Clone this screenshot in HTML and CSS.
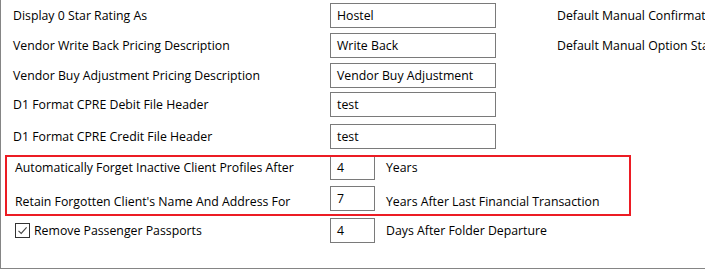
FILE: index.html
```html
<!DOCTYPE html>
<html>
<head>
<meta charset="utf-8">
<link rel="stylesheet" href="styles.css">
</head>
<body>
<div class="group">
  <div class="rows">
    <div class="row r1">
      <span class="label">Display 0 Star Rating As</span>
      <span class="field"><span class="box wide">Hostel</span></span>
      <span class="side">Default Manual Confirmation Status</span>
    </div>
    <div class="row r2">
      <span class="label">Vendor Write Back Pricing Description</span>
      <span class="field"><span class="box wide">Write Back</span></span>
      <span class="side">Default Manual Option Status</span>
    </div>
    <div class="row r3">
      <span class="label">Vendor Buy Adjustment Pricing Description</span>
      <span class="field"><span class="box wide">Vendor Buy Adjustment</span></span>
    </div>
    <div class="row r4">
      <span class="label">D1 Format CPRE Debit File Header</span>
      <span class="field"><span class="box wide">test</span></span>
    </div>
    <div class="row r5">
      <span class="label">D1 Format CPRE Credit File Header</span>
      <span class="field"><span class="box wide">test</span></span>
    </div>
    <div class="highlight">
      <div class="row r6">
        <span class="label inset">Automatically Forget Inactive Client Profiles After</span>
        <span class="field"><span class="box small">4</span><span class="suffix">Years</span></span>
      </div>
      <div class="row r7 low">
        <span class="label inset">Retain Forgotten Client's Name And Address For</span>
        <span class="field"><span class="box small">7</span><span class="suffix">Years After Last Financial Transaction</span></span>
      </div>
    </div>
    <div class="row r8">
      <span class="label check-label"><span class="check"><svg width="13" height="13" viewBox="0 0 13 13"><path d="M2.5 6.8 L5.2 9.4 L10.6 3.4" fill="none" stroke="#444" stroke-width="1.1"/></svg></span>Remove Passenger Passports</span>
      <span class="field"><span class="box small">4</span><span class="suffix">Days After Folder Departure</span></span>
    </div>
  </div>
</div>
</body>
</html>
```
FILE: styles.css
```css
html, body {
  margin: 0;
  padding: 0;
  background: #ffffff;
  overflow: hidden;
}
body {
  font-family: "Open Sans", "Noto Sans", sans-serif;
  font-size: 12.3px;
  color: #000000;
  width: 705px;
  height: 277px;
}
.group {
  width: 760px;
  height: 269px;
  border-left: 1px solid #858585;
  border-bottom: 1px solid #858585;
  box-sizing: border-box;
}
.rows {
  display: flex;
  flex-direction: column;
  padding-top: 3px;
}
.row {
  display: flex;
  align-items: center;
  height: 25px;
  white-space: nowrap;
}
.r2, .r3 { margin-top: 5px; }
.r4 { margin-top: 4px; }
.r5 { margin-top: 7px; }
.highlight {
  position: relative;
  margin-top: 6px;
}
.r7 { margin-top: 6px; }
.r8 { margin-top: 7px; }
.highlight::after {
  content: "";
  position: absolute;
  left: 4px;
  top: 0;
  width: 626px;
  height: 61px;
  border: 2px solid #ec1c24;
  box-sizing: border-box;
}
.label {
  width: 329px;
  padding-left: 12px;
  box-sizing: border-box;
  flex: none;
}
.label.inset { padding-left: 14px; }
.low .label, .low .suffix { padding-top: 5px; }
.field {
  flex: none;
  min-width: 227px;
  display: flex;
  align-items: center;
  gap: 11px;
}
.box {
  height: 25px;
  box-sizing: border-box;
  border: 1px solid #7a7a7a;
  padding: 0 6px;
  display: flex;
  align-items: center;
  background: #fff;
}
.box.wide { width: 166px; }
.box.small { width: 45px; }
.check-label {
  display: flex;
  align-items: center;
  padding-left: 14px;
}
.check {
  width: 15px;
  height: 15px;
  box-sizing: border-box;
  border: 1px solid #333333;
  display: flex;
  align-items: center;
  justify-content: center;
  margin-right: 4px;
}
.check svg { display: block; }
```
